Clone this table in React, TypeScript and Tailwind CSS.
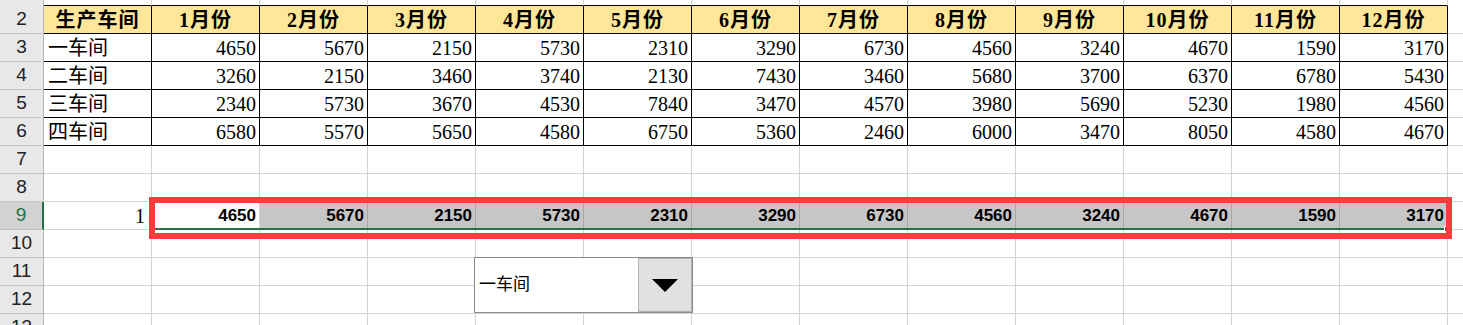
import React from "react";

const months = [
  "1月份", "2月份", "3月份", "4月份", "5月份", "6月份",
  "7月份", "8月份", "9月份", "10月份", "11月份", "12月份",
];

const shops: [string, number[]][] = [
  ["一车间", [4650, 5670, 2150, 5730, 2310, 3290, 6730, 4560, 3240, 4670, 1590, 3170]],
  ["二车间", [3260, 2150, 3460, 3740, 2130, 7430, 3460, 5680, 3700, 6370, 6780, 5430]],
  ["三车间", [2340, 5730, 3670, 4530, 7840, 3470, 4570, 3980, 5690, 5230, 1980, 4560]],
  ["四车间", [6580, 5570, 5650, 4580, 6750, 5360, 2460, 6000, 3470, 8050, 4580, 4670]],
];

const serif = "font-['Liberation_Serif','Noto_Sans_CJK_SC',serif]";
const sans = "font-['Liberation_Sans','Noto_Sans_CJK_SC',sans-serif]";

function RowHead({ n, active }: { n?: number; active?: boolean }) {
  return (
    <div
      className={`w-[44px] shrink-0 flex items-center justify-center text-[19px] ${sans} ${
        active
          ? "bg-[#d2d2d2] text-[#217346] border-r-2 border-r-[#217346] border-b border-b-[#bcbcbc]"
          : "bg-[#e8e8e8] text-[#222] border-r border-r-[#b5b5b5] border-b border-b-[#c6c6c6]"
      }`}
    >
      {n}
    </div>
  );
}

function BlankRow({ n }: { n: number }) {
  return (
    <div className="flex h-[28px]">
      <RowHead n={n} />
      {Array.from({ length: 13 }).map((_, i) => (
        <div key={i} className="w-[108px] shrink-0 border-r border-b border-[#d4d4d4] bg-white" />
      ))}
      <div className="flex-1 border-b border-[#d4d4d4] bg-white" />
    </div>
  );
}

export default function App() {
  const first = shops[0][1];
  return (
    <div className="relative w-[1463px] h-[325px] overflow-hidden bg-white select-none">
      {/* row 1 tail */}
      <div className="flex h-[6px]">
        <div className="w-[44px] shrink-0 bg-[#e8e8e8] border-r border-[#b5b5b5]" />
        {Array.from({ length: 13 }).map((_, i) => (
          <div key={i} className="w-[108px] shrink-0 border-r border-r-[#d4d4d4] border-b border-b-black" />
        ))}
        <div className="flex-1" />
      </div>

      {/* header row */}
      <div className="flex h-[28px]">
        <RowHead n={2} />
        {["生产车间", ...months].map((m) => (
          <div
            key={m}
            className={`w-[108px] shrink-0 bg-[#ffe699] border-r border-b border-black flex items-center justify-center font-bold text-[20px] tracking-[1px] text-black ${serif}`}
          >
            {m}
          </div>
        ))}
        <div className="flex-1 border-b border-[#d4d4d4]" />
      </div>

      {/* data rows */}
      {shops.map(([name, vals], r) => (
        <div key={name} className="flex h-[28px]">
          <RowHead n={r + 3} />
          <div className={`w-[108px] shrink-0 border-r border-b border-black flex items-center pl-[4px] text-[20px] text-black ${serif}`}>
            {name}
          </div>
          {vals.map((v, i) => (
            <div
              key={i}
              className={`w-[108px] shrink-0 border-r border-b border-black flex items-center justify-end pr-[3px] text-[20px] text-black ${serif}`}
            >
              {v}
            </div>
          ))}
          <div className="flex-1 border-b border-[#d4d4d4]" />
        </div>
      ))}

      <BlankRow n={7} />
      <BlankRow n={8} />

      {/* row 9 */}
      <div className="flex h-[28px]">
        <RowHead n={9} active />
        <div className={`w-[108px] shrink-0 border-r border-b border-[#d4d4d4] flex items-center justify-end pr-[6px] text-[20px] text-black ${serif}`}>
          1
        </div>
        {first.map((v, i) => (
          <div
            key={i}
            className={`w-[108px] shrink-0 border-b border-[#d4d4d4] border-r flex items-center justify-end pr-[3px] pt-[1px] text-[17px] font-bold text-black ${sans} ${
              i === 0 ? "bg-white border-r-[#d4d4d4]" : "bg-[#c6c6c6] border-r-[#a8a8a8]"
            }`}
          >
            {v}
          </div>
        ))}
        <div className="flex-1 border-b border-[#d4d4d4]" />
      </div>

      <BlankRow n={10} />
      <BlankRow n={11} />
      <BlankRow n={12} />
      <BlankRow n={13} />

      {/* selection border */}
      <div className="absolute left-[150px] top-[199px] w-[1298px] h-[31px] border-2 border-[#217346]" />
      <div className="absolute left-[1444px] top-[226px] w-[6px] h-[6px] bg-[#217346] border border-white" />

      {/* red highlight box */}
      <div className="absolute left-[149px] top-[197px] w-[1303px] h-[42px] border-[6px] border-[#fa3b3b]" />

      {/* dropdown control */}
      <div className="absolute left-[474px] top-[257px] w-[219px] h-[56px] flex border border-[#8a8a8a] bg-white">
        <div className={`flex-1 flex items-center pl-[4px] text-[17px] text-black ${sans}`}>一车间</div>
        <div className="w-[54px] flex items-center justify-center bg-[#e1e1e1] border border-[#b0b0b0]">
          <svg width="26" height="13" viewBox="0 0 26 13">
            <path d="M0 0 H26 L13 13 Z" fill="#000" />
          </svg>
        </div>
      </div>
    </div>
  );
}
